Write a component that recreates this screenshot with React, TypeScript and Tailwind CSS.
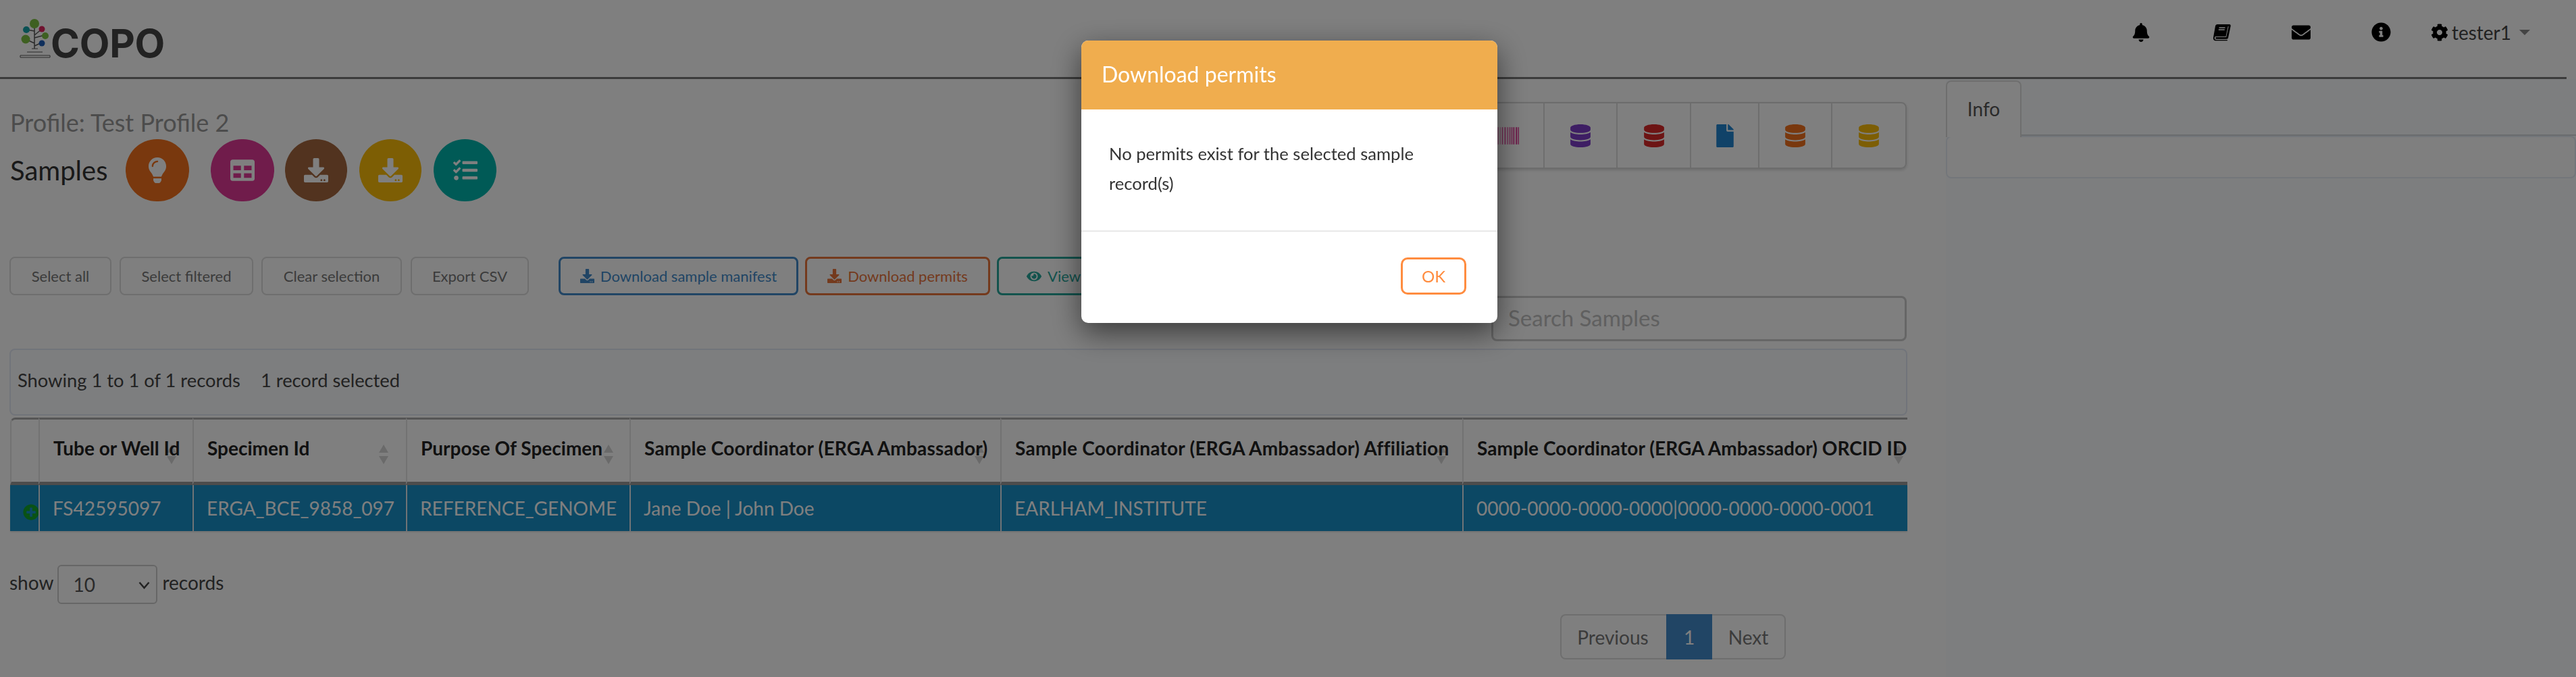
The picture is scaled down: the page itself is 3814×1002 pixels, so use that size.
import { FaBarcode, FaBell, FaCog, FaDatabase, FaDownload, FaEnvelope, FaEye, FaFile, FaInfoCircle, FaLightbulb, FaPlusCircle, FaTable, FaTasks } from "react-icons/fa";

const circles = [
  { icon: <FaLightbulb size={38} />, cls: "w-[94px] bg-[#f2711c] mr-[32px]" },
  { icon: <FaTable size={36} />, cls: "w-[94px] bg-[#e03997] mr-[16px]" },
  { icon: <FaDownload size={36} />, cls: "w-[92px] bg-[#a5673f] mr-[18px]" },
  { icon: <FaDownload size={36} />, cls: "w-[92px] bg-[#fbbd08] mr-[18px]" },
  { icon: <FaTasks size={36} />, cls: "w-[93px] bg-[#00b5ad]" },
];

const tools = [
  { w: "w-[108px]", icon: <FaBarcode size={34} className="text-[#e03997]" /> },
  { w: "w-[108px]", icon: <FaBarcode size={34} className="text-[#e03997]" /> },
  { w: "w-[108px]", icon: <FaDatabase size={34} className="text-[#7d3cc8]" /> },
  { w: "w-[109px]", icon: <FaDatabase size={34} className="text-[#db2828]" /> },
  { w: "w-[101px]", icon: <FaFile size={34} className="text-[#2185d0]" /> },
  { w: "w-[108px]", icon: <FaDatabase size={34} className="text-[#f2711c]" /> },
  { w: "w-[110px]", icon: <FaDatabase size={34} className="text-[#fbbd08]" /> },
];

const columns = [
  { w: "w-[42px]", label: "", value: "", arrows: "" },
  { w: "w-[228px]", label: "Tube or Well Id", value: "FS42595097", arrows: "right-[24px]" },
  { w: "w-[316px]", label: "Specimen Id", value: "ERGA_BCE_9858_097", arrows: "right-[26px]" },
  { w: "w-[331px]", label: "Purpose Of Specimen", value: "REFERENCE_GENOME", arrows: "right-[24px]" },
  { w: "w-[549px] tracking-[0.2px]", label: "Sample Coordinator (ERGA Ambassador)", value: "Jane Doe | John Doe", arrows: "right-[24px]" },
  { w: "w-[684px] tracking-[0.25px]", label: "Sample Coordinator (ERGA Ambassador) Affiliation", value: "EARLHAM_INSTITUTE", arrows: "right-[24px]" },
  { w: "w-[659px] tracking-[0.08px]", label: "Sample Coordinator (ERGA Ambassador) ORCID ID", value: "0000-0000-0000-0000|0000-0000-0000-0001", arrows: "right-[6px]" },
];

function BookIcon() {
  return (
    <svg width="27" height="26" viewBox="0 0 27 26">
      <path d="M7 1h18c1 0 2 1 1.700 2.400L23 21c-.3 1-1 1.700-2 1.700H6c-1.500 0-2-.8-1.800-1.600.2-.8 1-1.100 2-1.100h14l3.500-16-1 0L19.500 19H4.500C3 19 2.800 20.500 2.800 21.500 2.800 23 4 24 6 24h16l-.4 1.300H5c-3 0-4.500-2-4-4.800L4 3.500C4.400 2 5.500 1 7 1z" />
      <path d="M5.500 3h16.500L18.500 19H2.500z" />
      <path d="M9.500 6h9M8.800 9h9" stroke="#fff" strokeWidth="1.600" />
    </svg>
  );
}

function TreeLogo() {
  return (
    <svg width="48" height="58" viewBox="0 0 48 58">
      <g stroke="#555" strokeWidth="1.500" fill="none">
        <path d="M23 6V44M23 18L12 16M23 24L34 15M23 28L38 24M23 36L10 30M23 40L34 35" />
        <path d="M19 44h9M12 49h23M2 54h44M2 54v3h44v-3" strokeWidth="1" />
      </g>
      <circle cx="23" cy="7" r="7" fill="#7cc142" />
      <circle cx="11" cy="16" r="5" fill="#14a3a8" />
      <circle cx="34" cy="15" r="4.500" fill="#e0245e" />
      <circle cx="39" cy="25" r="5" fill="#7cc142" />
      <circle cx="10" cy="30" r="6.500" fill="#7cc142" />
      <circle cx="34" cy="36" r="4.500" fill="#1f5fb8" />
    </svg>
  );
}

function SortArrows({ className }: { className: string }) {
  return (
    <span className={`absolute top-[37px] flex flex-col gap-[5px] ${className}`}>
      <span className="w-0 h-0 border-x-[7px] border-x-transparent border-b-[12px] border-b-[#d4d4d4]" />
      <span className="w-0 h-0 border-x-[7px] border-x-transparent border-t-[12px] border-t-[#d4d4d4]" />
    </span>
  );
}

export default function App() {
  return (
    <div className="relative w-[3814px] h-[1002px] overflow-hidden bg-white font-[Lato,sans-serif] text-[28px] text-[#333]">
      <nav className="flex items-start w-[3800px] h-[117px] border-b-[3px] border-[#777]">
        <div className="flex items-end ml-[28px] mt-[28px]">
          <TreeLogo />
          <span className="font-[Inter,sans-serif] font-bold text-[58px] leading-[42px] mb-[1px] -ml-px text-[#444] tracking-[-0.2px]">COPO</span>
        </div>
        <div className="flex items-center ml-auto mr-[54px] mt-[33px] h-[30px] text-black">
          <FaBell size={28} className="mr-[92px]" />
          <BookIcon />
          <FaEnvelope size={28} className="ml-[90px] mr-[90px]" />
          <FaInfoCircle size={29} className="mr-[59px] -mt-[2px]" />
          <FaCog size={26} className="mr-[5px]" />
          <span className="text-[#444] leading-none">tester1</span>
          <span className="ml-[12px] w-0 h-0 border-x-[8px] border-x-transparent border-t-[8px] border-t-[#888]" />
        </div>
      </nav>

      <div className="flex">
        <main className="w-[2810px] ml-[14px] shrink-0">
          <div className="flex items-start h-[263px]">
            <div className="pt-[42px]">
              <div className="text-[36px] leading-[44px] text-[#999] ml-px">Profile: Test Profile 2</div>
              <div className="flex items-center mt-[3px]">
                <h2 className="w-[172px] pl-px text-[40px] font-normal text-[#333]">Samples</h2>
                {circles.map((c, i) => (
                  <span key={i} className={`flex items-center justify-center h-[92px] rounded-full text-white ${c.cls}`}>
                    {c.icon}
                  </span>
                ))}
              </div>
            </div>
            <div className="flex ml-auto mr-px mt-[34px] h-[99px] rounded-lg border-2 border-[#d8d8d8] shadow-[0_2px_4px_rgba(0,0,0,0.15)]">
              {tools.map((t, i) => (
                <span key={i} className={`flex items-center justify-center border-l-2 first:border-l-0 border-[#dddddd] ${t.w}`}>
                  {t.icon}
                </span>
              ))}
            </div>
          </div>

          <div className="flex text-[22px] leading-none">
            <button className="w-[151px] h-[57px] rounded-lg border-2 border-[#dddddd] text-[#777]">Select all</button>
            <button className="w-[198px] h-[57px] ml-[12px] rounded-lg border-2 border-[#dddddd] text-[#777]">Select filtered</button>
            <button className="w-[208px] h-[57px] ml-[12px] rounded-lg border-2 border-[#dddddd] text-[#777]">Clear selection</button>
            <button className="w-[175px] h-[57px] ml-[13px] rounded-lg border-2 border-[#dddddd] text-[#777]">Export CSV</button>
            <button className="flex items-center justify-center gap-[9px] w-[355px] h-[57px] ml-[44px] rounded-lg border-[3px] border-[#428bca] text-[#428bca]">
              <FaDownload size={21} />
              Download sample manifest
            </button>
            <button className="flex items-center justify-center gap-[9px] w-[274px] h-[57px] ml-[10px] rounded-lg border-[3px] border-[#e8743b] text-[#e8743b]">
              <FaDownload size={21} />
              Download permits
            </button>
            <button className="flex items-center justify-center gap-[9px] w-[240px] h-[57px] ml-[10px] rounded-lg border-[3px] border-[#26a69a] text-[#26a69a]">
              <FaEye size={22} />
              View images
            </button>
          </div>

          <div className="flex justify-end mt-px">
            <input
              placeholder="Search Samples"
              className="w-[615px] h-[67px] mr-px px-[22px] pb-[3px] rounded-lg border-[3px] border-[#cccccc] text-[33px] placeholder:text-[#c0c0c0]"
            />
          </div>

          <div className="flex items-center h-[99px] mt-[11px] pl-[10px] pb-[5px] rounded-lg border-2 border-[#e3e8f4] bg-[#fbfcfe] text-[27.3px] text-[#444]">
            <span>Showing 1 to 1 of 1 records</span>
            <span className="ml-[30px]">1 record selected</span>
          </div>

          <table className="table-fixed border-separate border-spacing-0 w-[2809px] ml-px mt-[3px]">
            <thead>
              <tr>
                {columns.map((c, i) => (
                  <th
                    key={i}
                    className={`relative h-[100px] pl-[20px] pb-[8px] text-left font-bold text-[#222] whitespace-nowrap overflow-hidden border-t-[3px] border-b-[5px] border-l-2 border-t-[#aaaaaa] border-b-[#999] border-l-[#e4e4e4] first:rounded-tl-lg ${c.w}`}
                  >
                    {c.label && <SortArrows className={c.arrows} />}
                    <span className="relative">{c.label}</span>
                  </th>
                ))}
              </tr>
            </thead>
            <tbody>
              <tr className="bg-[#1890c8] text-white">
                {columns.map((c, i) => (
                  <td key={i} className="relative h-[68px] pl-[19px] whitespace-nowrap border-l-2 first:border-l-0 border-[#e0e8ee] shadow-[0_2px_2px_rgba(0,0,0,0.1)]">
                    {i === 0 ? <FaPlusCircle size={24} className="absolute left-[19px] top-[28px] text-[#12a52c]" /> : c.value}
                  </td>
                ))}
              </tr>
            </tbody>
          </table>

          <div className="flex items-center mt-[50px] text-[#444]">
            <span className="mb-[6px]">show</span>
            <div className="relative flex items-center w-[148px] h-[58px] ml-[6px] pl-[21px] rounded-md border-2 border-[#cccccc] text-[#555]">
              10
              <svg className="absolute right-[9px] top-[22px]" width="17" height="12" viewBox="0 0 17 12" fill="none" stroke="#444" strokeWidth="2.500">
                <path d="M1.500 2l7 8 7-8" />
              </svg>
            </div>
            <span className="ml-[7px] mb-[6px]">records</span>
          </div>

          <div className="flex justify-end pr-[180px] mt-[15px]">
            <div className="flex h-[67px] items-stretch text-[#777]">
              <span className="flex items-center justify-center w-[157px] pr-[3px] rounded-l-lg border-2 border-r-0 border-[#dddddd]">Previous</span>
              <span className="flex items-center justify-center w-[68px] bg-[#428bca] text-white">1</span>
              <span className="flex items-center justify-center w-[109px] rounded-r-lg border-2 border-l-0 border-[#dddddd]">Next</span>
            </div>
          </div>
        </main>

        <aside className="flex-1 ml-[57px] h-[885px] bg-[#fbfcfe]">
          <div className="flex h-[84px] pt-[2px] border-b-2 border-[#d5d8dc]">
            <div className="flex items-center justify-center w-[112px] h-[84px] pb-[2px] rounded-t-lg border-2 border-b-0 border-[#dddddd] bg-white text-[#555]">Info</div>
          </div>
          <div className="h-[63px] rounded-lg border-2 border-[#e6ecf4] bg-white" />
        </aside>
      </div>

      <div className="fixed inset-0 flex justify-center pl-[4px] pt-[60px] bg-black/50">
        <div className="w-[616px] h-[418px] rounded-[10px] bg-white shadow-[0_14px_44px_rgba(0,0,0,0.55)] overflow-hidden">
          <div className="flex items-center h-[102px] pl-[30px] pb-[2px] bg-[#f0ad4e] text-[32px] text-white">Download permits</div>
          <div className="h-[181px] px-[41px] pt-[43px] border-b-2 border-[#e8e8e8] text-[25.6px] leading-[44px] text-[#333]">
            No permits exist for the selected sample record(s)
          </div>
          <div className="flex justify-end pr-[46px] pt-[38px]">
            <button className="w-[97px] h-[55px] rounded-[10px] border-[3px] border-[#ff8c3f] text-[24px] text-[#ff8c3f]">OK</button>
          </div>
        </div>
      </div>
    </div>
  );
}
